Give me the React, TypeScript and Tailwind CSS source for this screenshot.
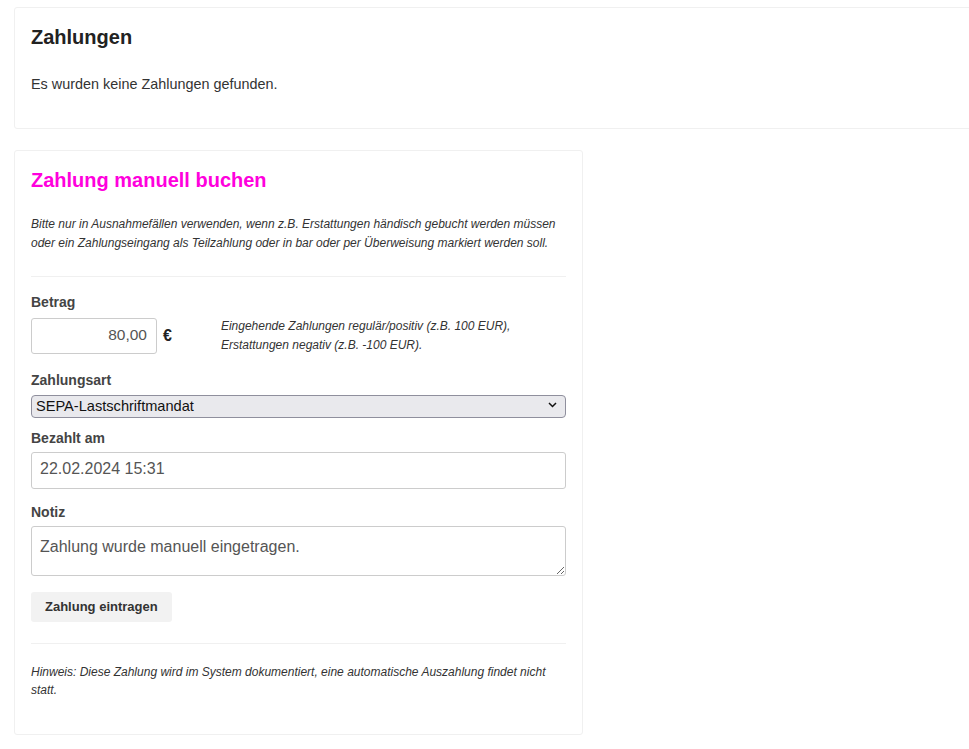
import React from "react";

const font = { fontFamily: '"Liberation Sans", Arial, Helvetica, sans-serif' };

function Label({ children }: { children: React.ReactNode }) {
    return <label className="block text-[14px] leading-[20px] font-bold text-[#444]">{children}</label>;
}

function PaymentsCard() {
    return (
        <div className="w-[1000px] border border-[#f0f0f0] rounded-[3px] bg-white px-[16px] pt-[18px] pb-[34px]">
            <h2 className="text-[20px] leading-[22px] font-bold text-[#222]">Zahlungen</h2>
            <p className="mt-[26px] text-[14.4px] leading-[20px] text-[#333]">Es wurden keine Zahlungen gefunden.</p>
        </div>
    );
}

function ManualPaymentCard() {
    return (
        <div className="w-[569px] border border-[#f0f0f0] rounded-[3px] bg-white px-[16px] pt-[18px] pb-[35px]">
            <h2 className="text-[20px] leading-[22px] font-bold text-[#ff00dd]">Zahlung manuell buchen</h2>
            <p className="mt-[24px] text-[12px] leading-[19px] italic text-[#333]">
                Bitte nur in Ausnahmefällen verwenden, wenn z.B. Erstattungen händisch gebucht werden müssen
                oder ein Zahlungseingang als Teilzahlung oder in bar oder per Überweisung markiert werden soll.
            </p>
            <div className="mt-[23px] h-px bg-[#f0f0f0]" />

            {/* Betrag */}
            <div className="mt-[15px]">
                <Label>Betrag</Label>
                <div className="mt-[6px] h-[36px] flex flex-row items-center">
                    <input
                        type="text"
                        defaultValue="80,00"
                        className="w-[126px] h-[36px] px-[9px] pb-[3px] text-right text-[15.5px] text-[#555] border border-[#ccc] rounded-[3px] bg-white outline-none"
                    />
                    <span className="ml-[6px] text-[16px] font-bold text-[#222]">€</span>
                    <p className="ml-[49px] text-[12px] leading-[19px] italic text-[#333]">
                        Eingehende Zahlungen regulär/positiv (z.B. 100 EUR),<br />
                        Erstattungen negativ (z.B. -100 EUR).
                    </p>
                </div>
            </div>

            {/* Zahlungsart */}
            <div className="mt-[16px]">
                <Label>Zahlungsart</Label>
                <div className="relative mt-[4px]">
                    <select
                        defaultValue="sepa"
                        className="w-full h-[23px] appearance-none pl-[4px] pr-[24px] text-[14.6px] leading-[20px] text-[#111] bg-[#e9e9ed] border border-[#8f8f9d] rounded-[4px] outline-none"
                    >
                        <option value="sepa">SEPA-Lastschriftmandat</option>
                        <option value="bar">Bar</option>
                        <option value="ueberweisung">Überweisung</option>
                    </select>
                    <svg
                        className="pointer-events-none absolute right-[9px] top-[8px]"
                        width="9"
                        height="6"
                        viewBox="0 0 9 6"
                        fill="none"
                    >
                        <path d="M1 1l3.5 3.5L8 1" stroke="#111" strokeWidth="1.5" />
                    </svg>
                </div>
            </div>

            {/* Bezahlt am */}
            <div className="mt-[10px]">
                <Label>Bezahlt am</Label>
                <input
                    type="text"
                    defaultValue="22.02.2024 15:31"
                    className="mt-[4px] block w-full h-[37px] px-[8px] pb-[3px] text-[16px] text-[#555] border border-[#ccc] rounded-[3px] bg-white outline-none"
                />
            </div>

            {/* Notiz */}
            <div className="mt-[13px]">
                <Label>Notiz</Label>
                <textarea
                    defaultValue="Zahlung wurde manuell eingetragen."
                    className="mt-[4px] block w-full h-[50px] px-[8px] pt-[10px] pb-[8px] text-[16px] leading-[20px] text-[#555] border border-[#ccc] rounded-[3px] bg-white outline-none"
                />
            </div>

            <button className="mt-[16px] h-[30px] px-[14px] rounded-[3px] bg-[#f2f2f2] text-[13px] font-bold text-[#333]">
                Zahlung eintragen
            </button>

            <div className="mt-[21px] h-px bg-[#f0f0f0]" />
            <p className="mt-[19px] text-[12px] leading-[18px] italic text-[#333]">
                Hinweis: Diese Zahlung wird im System dokumentiert, eine automatische Auszahlung findet nicht
                statt.
            </p>
        </div>
    );
}

export default function App() {
    return (
        <div className="w-full min-h-[749px] overflow-hidden bg-white" style={font}>
            <div className="flex flex-col items-start gap-[21px] pl-[14px] pt-[7px]">
                <PaymentsCard />
                <ManualPaymentCard />
            </div>
        </div>
    );
}
